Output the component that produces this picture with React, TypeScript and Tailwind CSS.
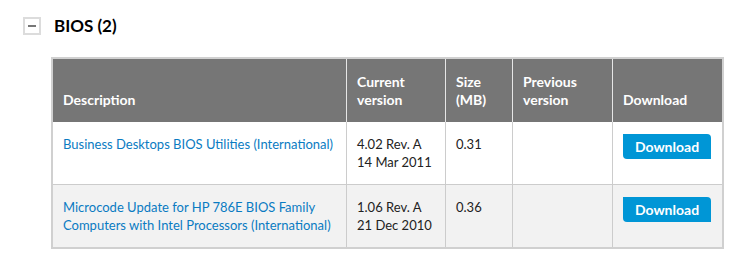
const rows = [
  {
    name: 'Business Desktops BIOS Utilities (International)',
    version: ['4.02 Rev. A', '14 Mar 2011'],
    size: '0.31',
  },
  {
    name: 'Microcode Update for HP 786E BIOS Family Computers with Intel Processors (International)',
    version: ['1.06 Rev. A', '21 Dec 2010'],
    size: '0.36',
  },
];

function DownloadButton() {
  return (
    <button className="w-[88px] h-[25px] bg-[#0096d6] text-white font-bold text-[14px] leading-[25px] rounded-tr-[4px] rounded-bl-[4px]">
      Download
    </button>
  );
}

export default function App() {
  return (
    <div className="w-[740px] h-[259px] bg-white font-['Lato',sans-serif] text-[13px] text-[#222]">
      <div className="flex items-center pt-[17px] pl-[23px] h-[35px]">
        <div className="w-[18px] h-[18px] border-2 border-[#dcdcdc] flex items-center justify-center">
          <div className="w-[8px] h-[2px] bg-[#777]" />
        </div>
        <h2 className="ml-[13px] text-[17px] font-bold text-black">BIOS (2)</h2>
      </div>

      <div className="ml-[51px] mt-[22px] w-[673px] border-2 border-[#d0d0d0]">
        <div className="flex h-[63px] bg-[#767676] text-white font-bold text-[14px] leading-[18px]">
          <div className="w-[293px] px-[10px] pb-[13px] flex items-end">Description</div>
          <div className="w-[99px] border-l border-[#e6e6e6] px-[10px] pb-[13px] flex items-end">Current<br />version</div>
          <div className="w-[67px] border-l border-[#e6e6e6] px-[10px] pb-[13px] flex items-end">Size<br />(MB)</div>
          <div className="w-[100px] border-l border-[#e6e6e6] px-[10px] pb-[13px] flex items-end">Previous<br />version</div>
          <div className="flex-1 border-l border-[#e6e6e6] px-[10px] pb-[13px] flex items-end">Download</div>
        </div>
        {rows.map((r, i) => (
          <div
            key={i}
            className={`flex leading-[18px] ${i > 0 ? 'border-t border-[#ccc] bg-[#f2f2f2]' : 'bg-white'}`}
          >
            <div className="w-[293px] px-[10px] py-[13px]">
              <a className="text-[#0a7bc2]">{r.name}</a>
            </div>
            <div className="w-[99px] border-l border-[#ccc] px-[10px] py-[13px]">
              {r.version[0]}
              <br />
              {r.version[1]}
            </div>
            <div className="w-[67px] border-l border-[#ccc] px-[10px] py-[13px]">{r.size}</div>
            <div className="w-[100px] border-l border-[#ccc]" />
            <div className="flex-1 border-l border-[#ccc] px-[10px] pt-[12px]">
              <DownloadButton />
            </div>
          </div>
        ))}
      </div>
    </div>
  );
}
